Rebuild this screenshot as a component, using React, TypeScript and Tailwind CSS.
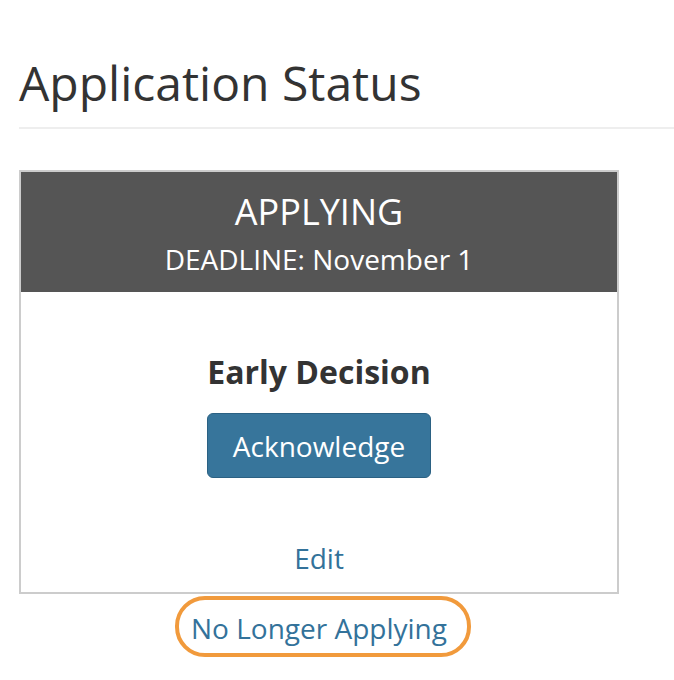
export default function App() {
  return (
    <div className="min-h-[680px] bg-white pl-[19px] pt-[58px] font-['Open_Sans',sans-serif] text-[#333]">
      {/* Page title */}
      <h1 className="text-[48px] font-normal leading-[50px] text-[#333]">Application Status</h1>
      <div className="mt-[19px] border-t-2 border-[#eee]" />

      {/* Status card */}
      <div className="mt-[41px] w-[600px] border-2 border-[#ccc]">
        <div className="h-[120px] bg-[#555] pt-[22px] text-center text-white">
          <div className="text-[36px] leading-[36px]">APPLYING</div>
          <div className="mt-[15px] text-[28px] leading-[28px]">DEADLINE: November 1</div>
        </div>
        <div className="flex flex-col items-center pt-[64px] pb-[20px]">
          <div className="text-[32px] font-bold leading-[32px] text-[#333]">Early Decision</div>
          <button className="mt-[25px] flex h-[65px] w-[224px] items-center justify-center rounded-[6px] border border-[#2b6183] bg-[#37759b] text-[28px] text-white">
            Acknowledge
          </button>
          <a href="#" className="mt-[66px] text-[28px] leading-[28px] text-[#33729a]">
            Edit
          </a>
        </div>
      </div>

      {/* Withdraw link, circled */}
      <div className="mt-[20px] flex w-[600px] justify-center">
        <a href="#" className="relative text-[28px] leading-[28px] text-[#33729a]">
          No Longer Applying
          <span className="absolute -top-[18px] -bottom-[15px] -left-[16px] -right-[24px] rounded-[30px] border-[4px] border-[#f19a3c]" />
        </a>
      </div>
    </div>
  );
}
